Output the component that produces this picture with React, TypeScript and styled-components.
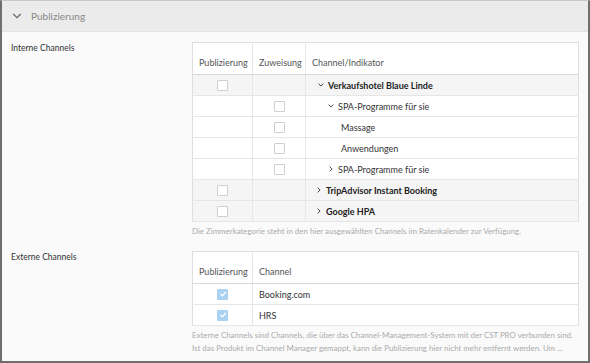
import styled, { createGlobalStyle } from 'styled-components'

// ── Global ─────────────────────────────────────────────────────────────────────

const GlobalStyle = createGlobalStyle`
  html, body {
    margin: 0;
    padding: 0;
    background: #fafafa;
  }
  body {
    font-family: Lato, "Noto Sans", sans-serif;
    color: #333;
  }
  * {
    box-sizing: border-box;
  }
`

// ── Frame ──────────────────────────────────────────────────────────────────────

const Frame = styled.div`
  height: 363px;
  border: 2px solid #6f6f6f;
  border-top: 1px solid #c8c8c8;
  background: #fafafa;
  overflow: hidden;
`

const PanelHeader = styled.div`
  height: 31px;
  background: #ebebeb;
  border-bottom: 1px solid #e2e2e2;
  display: flex;
  align-items: center;
  gap: 9px;
  padding-left: 10px;
  color: #888;
  font-size: 10px;
`

const PanelBody = styled.div`
  display: grid;
  grid-template-columns: 181px 1fr;
  padding: 10px 9px 0 9px;
  row-gap: 13px;
`

const SectionLabel = styled.div`
  font-size: 8.5px;
  color: #333;
  padding-top: 1px;
`

const Section = styled.div`
  display: flex;
  flex-direction: column;
`

// ── Tables ─────────────────────────────────────────────────────────────────────

const Table = styled.table`
  width: 100%;
  table-layout: fixed;
  border-collapse: collapse;
  background: #fff;
  border: 1px solid #dedede;
  font-size: 9px;
`

const HeadCell = styled.th<{ $w?: number }>`
  width: ${({ $w }) => ($w ? `${$w}px` : 'auto')};
  height: 32px;
  padding: 0 5px 6px 6px;
  vertical-align: bottom;
  text-align: left;
  font-weight: 400;
  color: #555;
  white-space: nowrap;
  border-right: 1px solid #e6e6e6;
  border-bottom: 1px solid #d8d8d8;

  &:last-child {
    border-right: none;
  }
`

const Row = styled.tr<{ $shaded?: boolean }>`
  background: ${({ $shaded }) => ($shaded ? '#f5f5f5' : '#fff')};
`

const Cell = styled.td<{ $center?: boolean }>`
  height: 21px;
  padding: 0 6px;
  text-align: ${({ $center }) => ($center ? 'center' : 'left')};
  vertical-align: middle;
  white-space: nowrap;
  border-right: 1px solid #e6e6e6;
  border-bottom: 1px solid #e6e6e6;
  line-height: 1;

  &:last-child {
    border-right: none;
  }
`

const Node = styled.div<{ $indent: number; $bold?: boolean }>`
  display: flex;
  align-items: center;
  gap: 4px;
  padding-left: ${({ $indent }) => $indent}px;
  font-weight: ${({ $bold }) => ($bold ? 700 : 400)};
  color: ${({ $bold }) => ($bold ? '#222' : '#333')};
`

const Box = styled.span<{ $checked?: boolean }>`
  display: inline-flex;
  align-items: center;
  justify-content: center;
  width: 11px;
  height: 11px;
  border: 1px solid ${({ $checked }) => ($checked ? '#a9d2f2' : '#cfcfcf')};
  border-radius: 1px;
  background: ${({ $checked }) => ($checked ? '#a9d2f2' : '#fff')};
  vertical-align: middle;
`

const Caption = styled.p`
  margin: 3px 0 0;
  font-size: 7.9px;
  line-height: 13px;
  color: #aaa;
  white-space: nowrap;
`

// ── Icons ──────────────────────────────────────────────────────────────────────

const Chevron = ({ open, size = 6 }: { open?: boolean; size?: number }) => (
  <svg width={size} height={size} viewBox="0 0 10 10" style={{ flex: 'none' }}>
    <path
      d={open ? 'M1.5 3.2 L5 6.8 L8.5 3.2' : 'M3.2 1.5 L6.8 5 L3.2 8.5'}
      fill="none"
      stroke="#444"
      strokeWidth="1.6"
      strokeLinecap="round"
      strokeLinejoin="round"
    />
  </svg>
)

const Check = () => (
  <svg width="8" height="8" viewBox="0 0 10 10">
    <path d="M2 5.2 L4.2 7.3 L8.2 2.8" fill="none" stroke="#fff" strokeWidth="1.6" strokeLinecap="round" strokeLinejoin="round" />
  </svg>
)

// ── Data ───────────────────────────────────────────────────────────────────────

type Internal = {
  name: string
  indent: number
  bold?: boolean
  chevron?: 'open' | 'closed'
  pub?: boolean
  assign?: boolean
  shaded?: boolean
}

const INTERNAL: Internal[] = [
  { name: 'Verkaufshotel Blaue Linde', indent: 6, bold: true, chevron: 'open', pub: true, shaded: true },
  { name: 'SPA-Programme für sie', indent: 16, chevron: 'open', assign: true },
  { name: 'Massage', indent: 29, assign: true },
  { name: 'Anwendungen', indent: 29, assign: true },
  { name: 'SPA-Programme für sie', indent: 16, chevron: 'closed', assign: true },
  { name: 'TripAdvisor Instant Booking', indent: 4, bold: true, chevron: 'closed', pub: true, shaded: true },
  { name: 'Google HPA', indent: 4, bold: true, chevron: 'closed', pub: true, shaded: true },
]

const EXTERNAL = ['Booking.com', 'HRS']

// ── Page ───────────────────────────────────────────────────────────────────────

export default function App() {
  return (
    <>
      <GlobalStyle />
      <Frame>
        <PanelHeader>
          <svg width="10" height="10" viewBox="0 0 10 10">
            <path d="M1.5 3.3 L5 6.7 L8.5 3.3" fill="none" stroke="#666" strokeWidth="1.2" strokeLinecap="round" />
          </svg>
          Publizierung
        </PanelHeader>

        <PanelBody>
          <SectionLabel>Interne Channels</SectionLabel>
          <Section>
            <Table>
              <thead>
                <tr>
                  <HeadCell $w={60}>Publizierung</HeadCell>
                  <HeadCell $w={53}>Zuweisung</HeadCell>
                  <HeadCell>Channel/Indikator</HeadCell>
                </tr>
              </thead>
              <tbody>
                {INTERNAL.map((r, i) => (
                  <Row key={i} $shaded={r.shaded}>
                    <Cell $center>{r.pub && <Box />}</Cell>
                    <Cell $center>{r.assign && <Box />}</Cell>
                    <Cell>
                      <Node $indent={r.indent} $bold={r.bold}>
                        {r.chevron && <Chevron open={r.chevron === 'open'} />}
                        {r.name}
                      </Node>
                    </Cell>
                  </Row>
                ))}
              </tbody>
            </Table>
            <Caption>
              Die Zimmerkategorie steht in den hier ausgewählten Channels im Ratenkalender zur Verfügung.
            </Caption>
          </Section>

          <SectionLabel>Externe Channels</SectionLabel>
          <Section>
            <Table>
              <thead>
                <tr>
                  <HeadCell $w={60}>Publizierung</HeadCell>
                  <HeadCell>Channel</HeadCell>
                </tr>
              </thead>
              <tbody>
                {EXTERNAL.map(name => (
                  <Row key={name}>
                    <Cell $center>
                      <Box $checked>
                        <Check />
                      </Box>
                    </Cell>
                    <Cell>{name}</Cell>
                  </Row>
                ))}
              </tbody>
            </Table>
            <Caption>
              Externe Channels sind Channels, die über das Channel-Management-System mit der CST PRO verbunden sind.
              <br />
              Ist das Produkt im Channel Manager gemappt, kann die Publizierung hier nicht mehr entfernt werden. Um …
            </Caption>
          </Section>
        </PanelBody>
      </Frame>
    </>
  )
}
